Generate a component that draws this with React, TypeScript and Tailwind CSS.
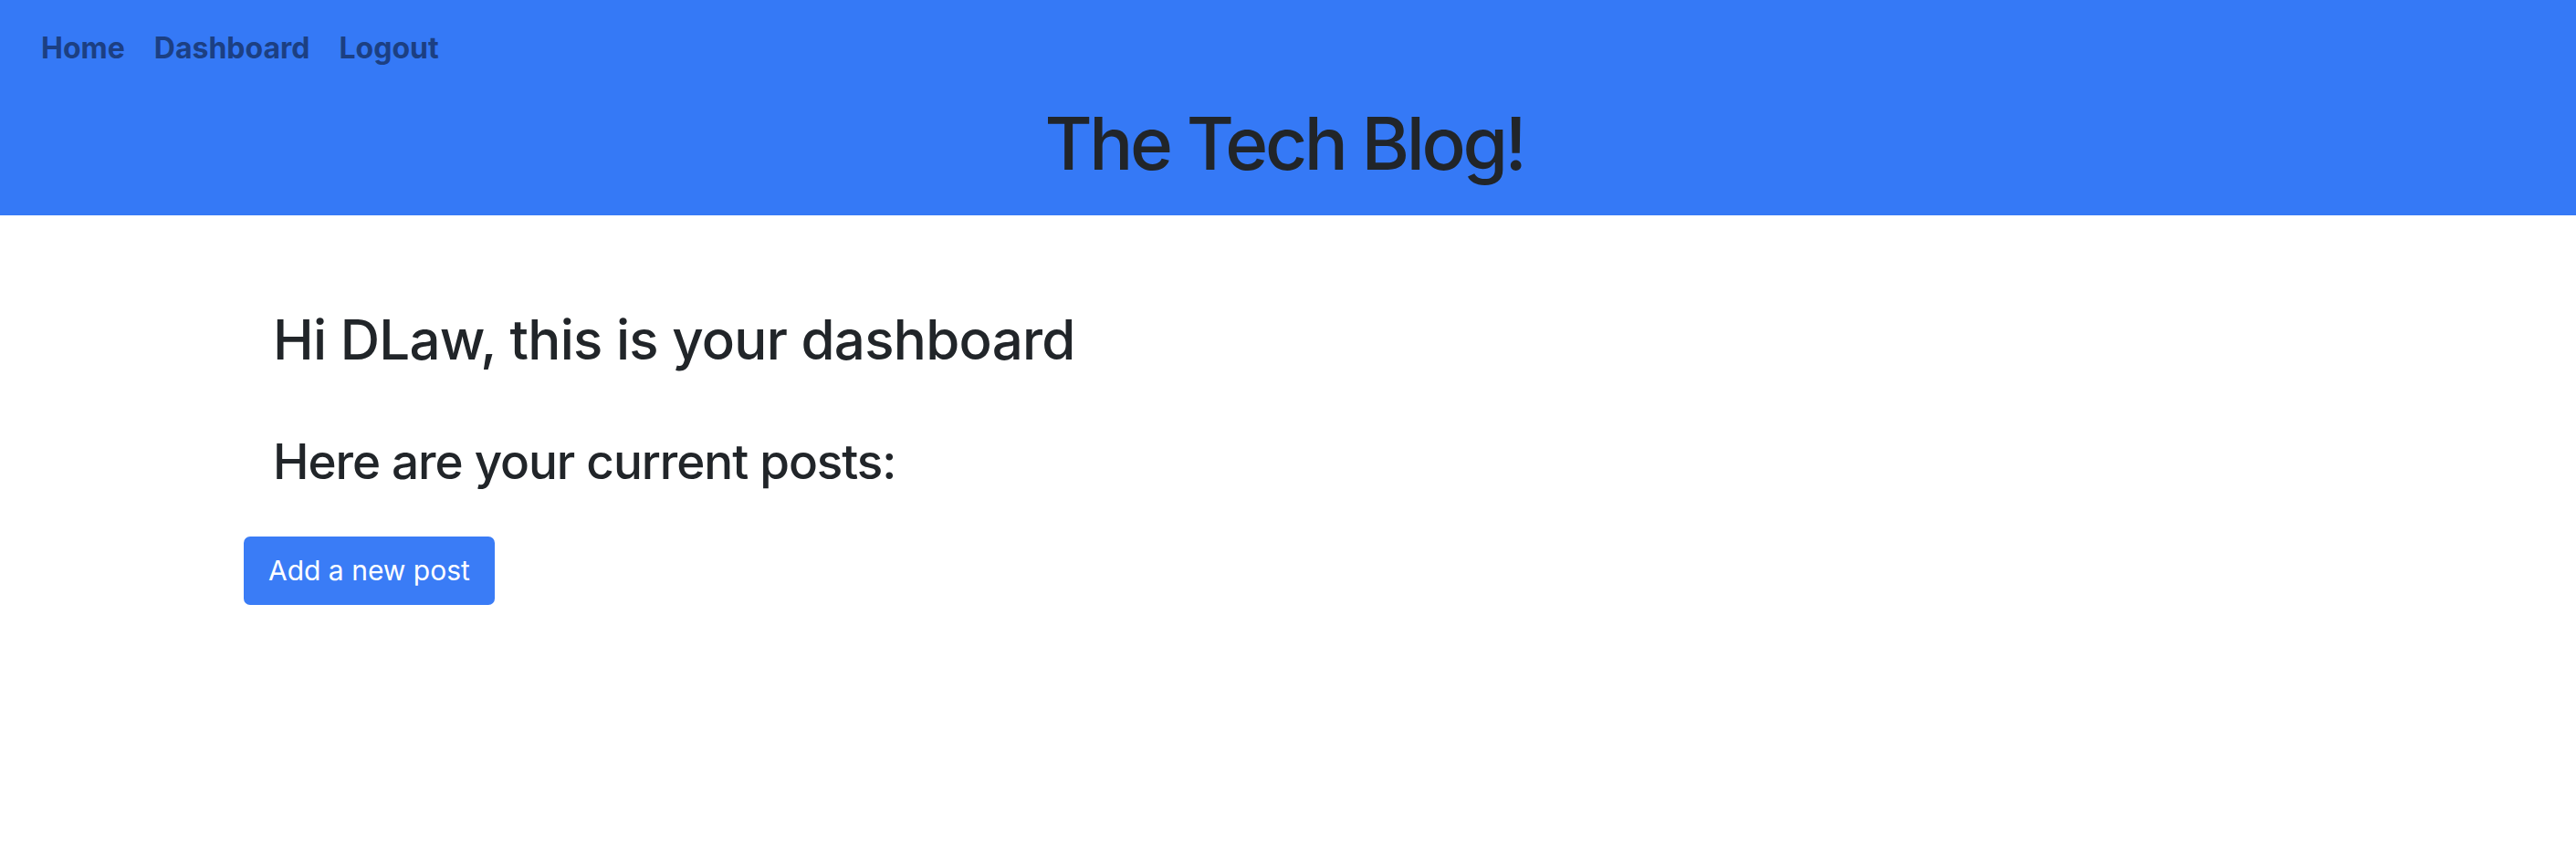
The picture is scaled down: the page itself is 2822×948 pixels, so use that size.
export default function App() {
  const links = ['Home', 'Dashboard', 'Logout'];

  return (
    <div className="min-h-screen bg-white text-[#212529] font-['Inter','Liberation_Sans',sans-serif]">
      {/* Header */}
      <header className="h-[236px] bg-[#3579f6]">
        <nav className="flex gap-[32px] pl-[45px] pt-[29px]">
          {links.map((link) => (
            <a key={link} href="#" className="text-[32px] leading-[1.5] font-bold text-[#1c3f82]">
              {link}
            </a>
          ))}
        </nav>
        <h1 className="mt-[32px] pr-[8px] text-center text-[80px] leading-[1.2] font-medium tracking-[-0.042em]">
          The Tech Blog!
        </h1>
      </header>

      {/* Dashboard */}
      <main className="ml-[267px] pt-[100px]">
        <h2 className="pl-[32px] text-[60px] leading-[1.2] font-medium tracking-[-0.012em]">
          Hi DLaw, this is your dashboard
        </h2>
        <h3 className="mt-[67px] pl-[32px] text-[53px] leading-[1.2] font-medium tracking-[-0.02em]">
          Here are your current posts:
        </h3>
        <button className="mt-[49px] rounded-[7px] bg-[#3a7cf6] px-[27px] py-[15px] text-[30px] leading-[1.5] text-white">
          Add a new post
        </button>
      </main>
    </div>
  );
}
